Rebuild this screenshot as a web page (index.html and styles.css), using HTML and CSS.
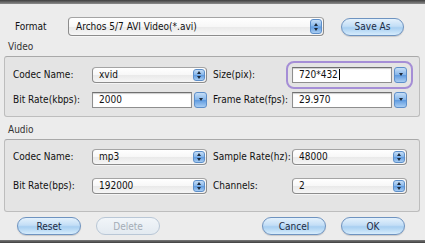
FILE: index.html
```html
<!DOCTYPE html>
<html>
<head>
<meta charset="utf-8">
<link rel="stylesheet" href="styles.css">
</head>
<body>
<div class="window">
  <div class="topbar"></div>
  <div class="format-row">
    <span class="format-lbl">Format</span>
    <div class="popup format-sel"><span class="val">Archos 5/7 AVI Video(*.avi)</span><span class="pbtn"><i class="up"></i><i class="dn"></i></span></div>
    <button class="btn saveas">Save As</button>
  </div>

  <div class="group-title">Video</div>
  <div class="group video">
    <div class="row">
      <label class="lbl">Codec Name:</label>
      <div class="popup fld"><span class="val">xvid</span><span class="pbtn"><i class="up"></i><i class="dn"></i></span></div>
      <label class="lbl r">Size(pix):</label>
      <div class="combo fld focus"><span class="val">720*432<span class="caret"></span></span><span class="cbtn"><i class="dn"></i></span></div>
    </div>
    <div class="row">
      <label class="lbl">Bit Rate(kbps):</label>
      <div class="combo fld"><span class="val">2000</span><span class="cbtn"><i class="dn"></i></span></div>
      <label class="lbl r">Frame Rate(fps):</label>
      <div class="combo fld"><span class="val">29.970</span><span class="cbtn"><i class="dn"></i></span></div>
    </div>
  </div>

  <div class="group-title audio-title">Audio</div>
  <div class="group audio">
    <div class="row">
      <label class="lbl">Codec Name:</label>
      <div class="popup fld"><span class="val">mp3</span><span class="pbtn"><i class="up"></i><i class="dn"></i></span></div>
      <label class="lbl r">Sample Rate(hz):</label>
      <div class="popup fld"><span class="val">48000</span><span class="pbtn"><i class="up"></i><i class="dn"></i></span></div>
    </div>
    <div class="row">
      <label class="lbl">Bit Rate(bps):</label>
      <div class="popup fld"><span class="val">192000</span><span class="pbtn"><i class="up"></i><i class="dn"></i></span></div>
      <label class="lbl r">Channels:</label>
      <div class="popup fld"><span class="val">2</span><span class="pbtn"><i class="up"></i><i class="dn"></i></span></div>
    </div>
  </div>

  <div class="buttons">
    <button class="btn">Reset</button>
    <button class="btn disabled">Delete</button>
    <span class="spacer"></span>
    <button class="btn">Cancel</button>
    <button class="btn">OK</button>
  </div>
  <div class="bottombar"></div>
</div>
</body>
</html>
```

FILE: styles.css
```css
html, body {
  margin: 0;
  padding: 0;
}
body {
  width: 425px;
  height: 243px;
  overflow: hidden;
  background: #ebebeb;
  font-family: "DejaVu Sans Condensed", "DejaVu Sans", sans-serif;
  font-stretch: condensed;
  font-size: 10px;
  color: #111;
}
.window {
  width: 425px;
  height: 243px;
  display: flex;
  flex-direction: column;
  background: #ececec;
}
.topbar {
  height: 4px;
  background: linear-gradient(#3f3f3f, #8d8d8d);
}
.format-row {
  display: flex;
  align-items: center;
  margin-top: 13px;
  height: 19px;
  padding-left: 15px;
}
.format-lbl {
  width: 53px;
}
.popup, .combo {
  position: relative;
  display: flex;
  align-items: center;
  box-sizing: border-box;
}
.popup {
  border: 1px solid #8c8c8c;
  border-top-color: #a4a4a4;
  border-radius: 4px;
  background: linear-gradient(#ffffff 0%, #f7f7f7 50%, #e9e9e9 51%, #f6f6f6 100%);
  box-shadow: 0 1px 0 rgba(255,255,255,0.6);
}
.format-sel {
  width: 256px;
  height: 19px;
}
.val {
  flex: 1;
  padding-left: 6px;
  white-space: nowrap;
  position: relative;
}
.format-sel .val { padding-left: 7px; }
.pbtn {
  width: 12px;
  align-self: stretch;
  margin: 1px;
  border-radius: 3px;
  background: linear-gradient(#c6def6 0%, #86b6ea 48%, #5f9be0 52%, #a9cdf2 100%);
  border: 1px solid #5d8fca;
  box-sizing: border-box;
  display: flex;
  flex-direction: column;
  align-items: center;
  justify-content: center;
  gap: 2px;
}
.up, .dn {
  display: block;
  width: 0;
  height: 0;
  border-left: 2.5px solid transparent;
  border-right: 2.5px solid transparent;
}
.up { border-bottom: 3px solid #1d2a3a; }
.dn { border-top: 3px solid #1d2a3a; }
.saveas {
  margin-left: 17px;
  width: 63px;
}
.btn {
  height: 18px;
  border: 1px solid #6e93c0;
  border-radius: 9px;
  background: linear-gradient(#e4f1fc 0%, #c3def6 45%, #a8cff1 55%, #d6ecfc 100%);
  font-family: "DejaVu Sans Condensed", "DejaVu Sans", sans-serif;
  font-stretch: condensed;
  font-size: 10px;
  color: #1c2a44;
  padding: 0;
  box-shadow: 0 1px 1px rgba(0,0,0,0.15);
}
.btn.disabled {
  border-color: #b9c7d6;
  background: linear-gradient(#f1f5f9, #e3eaf1);
  color: #a3acb6;
  box-shadow: none;
}
.group-title {
  margin: 5px 0 0 8px;
  height: 12px;
  line-height: 12px;
  color: #333;
}
.audio-title {
  margin-top: 7px;
}
.group {
  margin: 3px 5px 0 4px;
  border: 1px solid #bdbdbd;
  border-top-color: #a9a9a9;
  border-radius: 3px;
  background: #e4e4e4;
  padding: 10px 0 9px 8px;
  display: flex;
  flex-direction: column;
  gap: 10px;
}
.group.audio {
  padding-top: 9px;
  gap: 14px;
  padding-bottom: 18px;
}
.row {
  display: flex;
  align-items: center;
  height: 15px;
}
.lbl {
  width: 79px;
  white-space: nowrap;
}
.lbl.r {
  margin-left: 6px;
}
.fld {
  width: 115px;
  height: 16px;
}
.combo {
  border: none;
  gap: 2px;
}
.combo .val {
  align-self: stretch;
  display: flex;
  align-items: center;
  background: #fff;
  border: 1px solid #8e8e8e;
  border-top-color: #6f6f6f;
  box-shadow: inset 0 1px 1px rgba(0,0,0,0.2);
}
.cbtn {
  width: 13px;
  align-self: stretch;
  border-radius: 3px;
  background: linear-gradient(#c6def6 0%, #86b6ea 48%, #5f9be0 52%, #a9cdf2 100%);
  border: 1px solid #5d8fca;
  box-sizing: border-box;
  display: flex;
  align-items: center;
  justify-content: center;
}
.focus {
  outline: 2px solid #a58ed6;
  outline-offset: 4px;
  border-radius: 2px;
}
.caret {
  display: inline-block;
  width: 1px;
  height: 11px;
  background: #000;
  margin-left: 1px;
}
.buttons {
  display: flex;
  align-items: center;
  margin-top: 5px;
  padding: 0 20px 0 17px;
  gap: 15px;
}
.buttons .btn {
  width: 64px;
}
.spacer {
  flex: 1;
}
.bottombar {
  margin-top: auto;
  height: 3px;
  background: linear-gradient(#7a7a7a, #3e3e3e);
}
```
